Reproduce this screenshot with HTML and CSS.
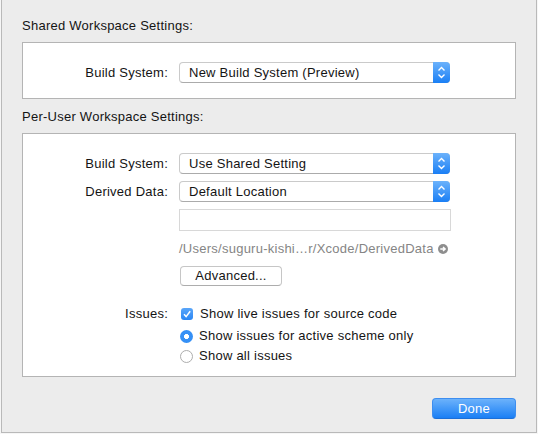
FILE: index.html
```html
<!DOCTYPE html>
<html lang="en">
<head>
    <meta charset="UTF-8">
    <meta name="viewport" content="width=device-width, initial-scale=1.0">
    <title>Workspace Settings</title>
    <link rel="stylesheet" href="styles.css">
</head>
<body>
    <div class="window">
        <h2 class="section-title">Shared Workspace Settings:</h2>
        <div class="group group-shared">
            <div class="row">
                <div class="row-label">Build System:</div>
                <div class="popup">
                    <span class="popup-value">New Build System (Preview)</span>
                    <span class="stepper">
                        <svg width="17" height="21" viewBox="0 0 17 21"><path d="M5.5 8.5 L8.5 5.5 L11.5 8.5 M5.5 12.5 L8.5 15.5 L11.5 12.5" fill="none" stroke="#fff" stroke-width="1.4"/></svg>
                    </span>
                </div>
            </div>
        </div>

        <h2 class="section-title">Per-User Workspace Settings:</h2>
        <div class="group group-user">
            <div class="row">
                <div class="row-label">Build System:</div>
                <div class="popup">
                    <span class="popup-value">Use Shared Setting</span>
                    <span class="stepper">
                        <svg width="17" height="21" viewBox="0 0 17 21"><path d="M5.5 8.5 L8.5 5.5 L11.5 8.5 M5.5 12.5 L8.5 15.5 L11.5 12.5" fill="none" stroke="#fff" stroke-width="1.4"/></svg>
                    </span>
                </div>
            </div>
            <div class="row row-derived">
                <div class="row-label">Derived Data:</div>
                <div class="popup">
                    <span class="popup-value">Default Location</span>
                    <span class="stepper">
                        <svg width="17" height="21" viewBox="0 0 17 21"><path d="M5.5 8.5 L8.5 5.5 L11.5 8.5 M5.5 12.5 L8.5 15.5 L11.5 12.5" fill="none" stroke="#fff" stroke-width="1.4"/></svg>
                    </span>
                </div>
            </div>
            <div class="row row-field">
                <div class="row-label"></div>
                <div class="text-field"></div>
            </div>
            <div class="row row-path">
                <div class="row-label"></div>
                <div class="path">
                    <span>/Users/suguru-kishi…r/Xcode/DerivedData</span>
                    <svg class="path-arrow" width="10" height="10" viewBox="0 0 10 10"><circle cx="5" cy="5" r="5" fill="#8e8e8e"/><path d="M2.3 5 H7 M5 2.9 L7.2 5 L5 7.1" fill="none" stroke="#fff" stroke-width="1.4"/></svg>
                </div>
            </div>
            <div class="row row-button">
                <div class="row-label"></div>
                <button class="btn">Advanced...</button>
            </div>
            <div class="row row-issues">
                <div class="row-label">Issues:</div>
                <div class="options">
                    <div class="option">
                        <span class="checkbox checked">
                            <svg width="12" height="12" viewBox="0 0 12 12"><path d="M3 6.3 L5.1 8.6 L9.2 3.2" fill="none" stroke="#fff" stroke-width="1.5"/></svg>
                        </span>
                        <span>Show live issues for source code</span>
                    </div>
                    <div class="option option-radio">
                        <span class="radio selected"></span>
                        <span>Show issues for active scheme only</span>
                    </div>
                    <div class="option option-radio-last">
                        <span class="radio"></span>
                        <span>Show all issues</span>
                    </div>
                </div>
            </div>
        </div>

        <div class="actions">
            <button class="btn btn-primary">Done</button>
        </div>
    </div>
</body>
</html>
```

FILE: styles.css
```css
:root {
    --window-bg: #ececec;
    --group-border: #b4b4b4;
    --text: #141414;
    --blue-top: #6cb2fb;
    --blue-bottom: #1a7ff5;
    --label-width: 145px;
    --control-width: 271px;
}

* {
    box-sizing: border-box;
}

body {
    margin: 0;
    width: 538px;
    height: 434px;
    overflow: hidden;
    background: #f6f6f6;
    font-family: "Liberation Sans", Arial, sans-serif;
    font-size: 13px;
    letter-spacing: 0.25px;
    color: var(--text);
}

.window {
    margin-left: 1px;
    width: 536px;
    height: 433px;
    padding: 18px 20px 0 20px;
    background: var(--window-bg);
    border: 1px solid #b9b9b9;
    border-top: none;
}

.section-title {
    margin: 0 0 8px 0;
    font-size: 13px;
    font-weight: normal;
    line-height: 16px;
}

.group {
    background: #fff;
    border: 1px solid var(--group-border);
}

.group-shared {
    padding: 19px 0 15px 0;
    margin-bottom: 10px;
}

.group-user {
    padding: 19px 0 10px 0;
}

/* Rows: label column on the left, control column on the right */
.row {
    display: flex;
    align-items: center;
}

.row-label {
    width: var(--label-width);
    margin-right: 11px;
    text-align: right;
    flex-shrink: 0;
}

.row-derived { margin-top: 7px; }
.row-field { margin-top: 7px; }
.row-path { margin-top: 10px; }
.row-button { margin-top: 9px; }
.row-issues {
    margin-top: 18px;
    align-items: flex-start;
}

.row-issues .row-label {
    line-height: 20px;
}

/* Pop-up button */
.popup {
    display: flex;
    width: var(--control-width);
    height: 21px;
    background: #fff;
    border: 1px solid #cacaca;
    border-bottom-color: #ababab;
    border-radius: 4px;
}

.popup-value {
    flex: 1;
    padding-left: 9px;
    line-height: 19px;
}

.stepper {
    width: 17px;
    margin: -1px -1px -1px 0;
    border-radius: 0 4px 4px 0;
    background: linear-gradient(to bottom, var(--blue-top), var(--blue-bottom));
    display: flex;
    align-items: center;
    justify-content: center;
}

.stepper svg {
    display: block;
}

.text-field {
    width: 272px;
    height: 22px;
    border: 1px solid #d8d8d8;
    background: #fff;
}

.path {
    display: flex;
    align-items: center;
    gap: 4px;
    color: #858585;
    line-height: 16px;
}

.path-arrow {
    display: block;
}

/* Buttons */
.btn {
    width: 102px;
    height: 20px;
    margin-left: 1px;
    padding: 0;
    font-family: inherit;
    font-size: 13px;
    letter-spacing: 0.25px;
    color: var(--text);
    background: #fff;
    border: 1px solid #c6c6c6;
    border-bottom-color: #adadad;
    border-radius: 4px;
    line-height: 18px;
}

.btn-primary {
    width: 84px;
    height: 21px;
    margin-left: 0;
    color: #fff;
    background: linear-gradient(to bottom, var(--blue-top), var(--blue-bottom));
    border: 1px solid #3d8ef0;
    border-bottom-color: #1b6fd8;
    line-height: 19px;
}

.actions {
    display: flex;
    justify-content: flex-end;
    margin-top: 21px;
}

/* Checkbox and radio list */
.options {
    display: flex;
    flex-direction: column;
}

.option {
    display: flex;
    align-items: center;
    gap: 7px;
    height: 20px;
    line-height: 20px;
    padding-left: 2px;
}

.option-radio { margin-top: 2px; }
.option-radio-last { margin-top: 0; }

.checkbox {
    width: 12px;
    height: 12px;
    border-radius: 3px;
    flex-shrink: 0;
}

.checkbox.checked {
    background: linear-gradient(to bottom, #5aa6f9, #2a86f4);
}

.checkbox svg {
    display: block;
}

.radio {
    width: 13px;
    height: 13px;
    border-radius: 50%;
    flex-shrink: 0;
    background: #fff;
    border: 1px solid #adadad;
    margin-left: -1px;
    margin-right: -1px;
}

.radio.selected {
    border: none;
    background: radial-gradient(circle, #fff 0 2.2px, #3590f6 2.8px);
}
```
